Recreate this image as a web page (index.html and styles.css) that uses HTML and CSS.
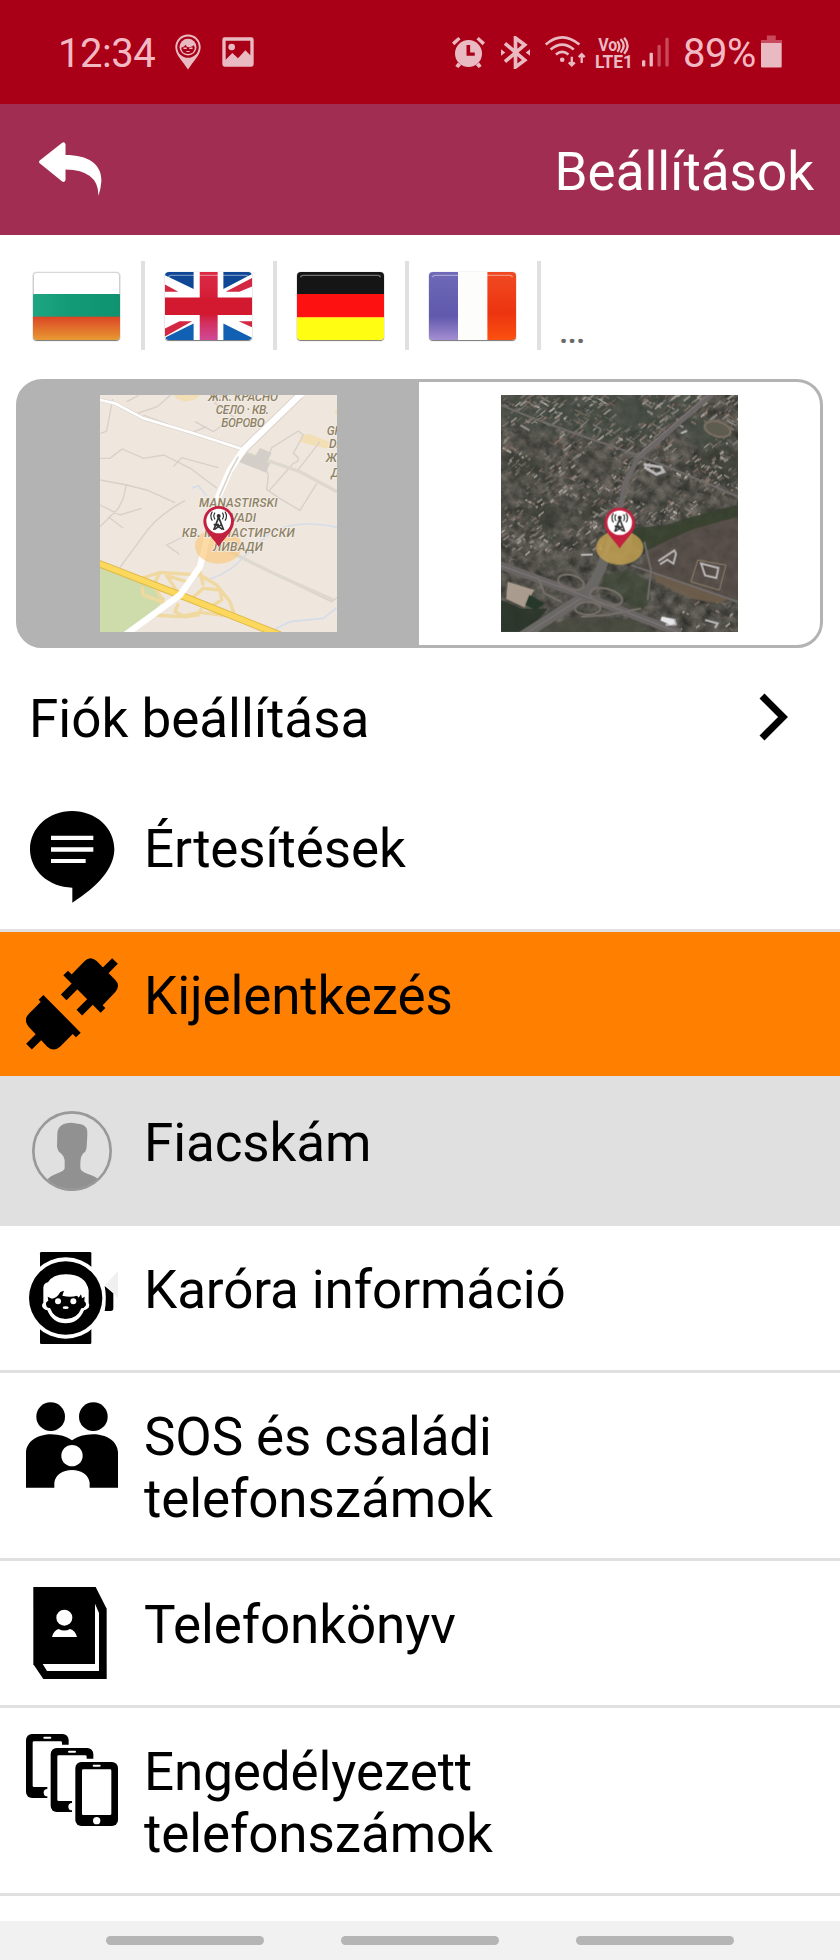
FILE: index.html
```html
<!DOCTYPE html>
<html lang="hu">
  <head>
    <meta charset="UTF-8" />
    <title>Beállítások</title>
    <link rel="stylesheet" href="styles.css">
  </head>
  <body>
    <!-- status bar -->
    <div class="status">
      <span class="time">12:34</span>
      <svg class="st-pin" viewBox="0 0 80 110">
        <path d="M40 1C18 1 1 18 1 40c0 24 24 44 39 69 15-25 39-45 39-69C79 18 62 1 40 1z" />
        <circle class="hole" cx="40" cy="40" r="33" />
        <circle cx="40" cy="40" r="26" />
        <path class="hole" d="M19 42q10-2 14-9 1 6 7 7 12 0 18-6l3 8q-2 19-21 19T19 42z" />
        <path d="M26 41h10v5H26zM44 41h10v5H44zM35 52h10v3H35z" />
      </svg>
      <svg class="st-img" viewBox="0 0 96 90">
        <path fill-rule="evenodd" d="M8 1h80q7 0 7 7v74q0 7-7 7H8q-7 0-7-7V8q0-7 7-7zM11 11v57l20-20 17 16 22-24 15 15V11z" />
        <circle cx="29" cy="30" r="10" />
      </svg>
      <svg class="st-alarm" viewBox="0 0 100 94">
        <path d="M0 17 19 0l7 7L7 25zM100 17 81 0l-7 7 19 18z" />
        <circle cx="50" cy="50" r="41" />
        <path d="m18 77 10 8-9 9-9-6zM82 77l-10 8 9 9 9-6z" />
        <path class="hole" d="M44 24h11v23h14v10H44z" />
      </svg>
      <svg class="st-bt" viewBox="0 0 88 100">
        <path class="line" d="M12 22 72 73 44 94V6l28 21-60 51" stroke-width="11" />
        <path d="m0 40 13 10L0 60zM88 40 75 50l13 10z" />
      </svg>
      <svg class="st-wifi" viewBox="0 0 124 98">
        <path class="line" d="M2 28Q52-16 104 28M17 43q35-30 70 0M33 58q19-16 38 0" stroke-width="8" />
        <circle cx="52" cy="74" r="7" />
        <path class="line" d="M81 65v26m-9-9 9 9 9-9M111 84V56m-9 10 9-9 9 9" stroke-width="7" />
      </svg>
      <svg class="st-lte" viewBox="0 0 116 100">
        <text x="10" y="45" textLength="58" lengthAdjust="spacingAndGlyphs">Vo</text>
        <path class="line" d="M68 16q14 16 0 32M78 9q19 20 0 41M89 5q21 25 0 49" stroke-width="7" />
        <text x="0" y="98" textLength="116" lengthAdjust="spacingAndGlyphs">LTE1</text>
      </svg>
      <svg class="st-signal" viewBox="0 0 82 90">
        <rect x="0" y="70" width="10" height="19" rx="3" />
        <rect x="23" y="47" width="10" height="42" rx="3" />
        <rect class="dim" x="47" y="24" width="10" height="65" rx="3" />
        <rect class="dim" x="71" y="2" width="10" height="87" rx="3" />
      </svg>
      <span class="percent">89%</span>
      <svg class="st-battery" viewBox="0 0 64 98">
        <path class="dim" d="M18 0h27v14h19v9H0v-9h18z" />
        <path d="M0 23h63v71q0 4-4 4H4q-4 0-4-4z" />
      </svg>
    </div>

    <!-- title bar -->
    <header class="header">
      <svg class="back" viewBox="0 0 190 164">
        <path d="M2 55 70 1q8-3 10 5v32c70 0 110 28 108 80q-2 26-9 44 2-78-99-80v32q-2 8-10 4L2 63q-4-4 0-8z" />
      </svg>
      <h1>Beállítások</h1>
    </header>

    <!-- languages -->
    <ul class="langs">
      <li>
        <svg class="flag" viewBox="0 0 228 207" preserveAspectRatio="none">
          <defs>
            <linearGradient id="bgRed" x2="0" y2="1"><stop offset="0" stop-color="#dc4525" /><stop offset="1" stop-color="#e79a32" /></linearGradient>
            <linearGradient id="bgGreen"><stop offset="0" stop-color="#1fa583" /><stop offset=".4" stop-color="#129b76" /><stop offset="1" stop-color="#0f9270" /></linearGradient>
          </defs>
          <rect fill="#fff" width="228" height="68" />
          <rect fill="url(#bgGreen)" y="67" width="228" height="70" />
          <rect fill="url(#bgRed)" y="136" width="228" height="71" />
          <path fill="none" stroke="#ccc" stroke-width="3" d="M1 68V12Q1 1 12 1h204q11 0 11 11v56" />
        </svg>
      </li>
      <li>
        <svg class="flag" viewBox="0 0 228 207" preserveAspectRatio="none">
          <defs>
            <linearGradient id="ukRed" x2="0" y2="1"><stop offset="0" stop-color="#dc2a45" /><stop offset=".6" stop-color="#cf1730" /><stop offset=".75" stop-color="#d2305f" /><stop offset="1" stop-color="#cf4a97" /></linearGradient>
          </defs>
          <rect fill="#fff" width="228" height="207" />
          <path fill="#0f4796" d="M5 0h70v52L0 10V0zM153 0h70l5 6-75 46z" />
          <path fill="#1160b4" d="M75 157v50H2v-8zM153 157l75 43v7h-75z" />
          <path fill="#d32742" d="M0 38 35 60H0zM228 18v26l-33 16h-36zM0 172l38-22h33L0 196zM193 150h35v18z" />
          <path fill="url(#ukRed)" d="M91 0h47v207H91z" />
          <path fill="#d2192f" d="M0 78h228v53H0z" />
          <path class="gloss" d="M10 16q0-6 6-6h196q6 0 6 6" />
        </svg>
      </li>
      <li>
        <svg class="flag" viewBox="0 0 228 207" preserveAspectRatio="none">
          <rect fill="#151515" width="228" height="68" />
          <rect fill="#fd1111" y="67" width="228" height="72" />
          <rect fill="#fffd12" y="138" width="228" height="69" />
          <path class="gloss" d="M10 16q0-6 6-6h196q6 0 6 6" />
        </svg>
      </li>
      <li>
        <svg class="flag" viewBox="0 0 228 207" preserveAspectRatio="none">
          <defs>
            <linearGradient id="frBlue" x2="0" y2="1"><stop offset="0" stop-color="#6f69b8" /><stop offset=".65" stop-color="#6059ac" /><stop offset="1" stop-color="#a48dd2" /></linearGradient>
            <linearGradient id="frRed" x2="0" y2="1"><stop offset="0" stop-color="#f04a22" /><stop offset=".6" stop-color="#ec3410" /><stop offset="1" stop-color="#fc5010" /></linearGradient>
          </defs>
          <rect fill="url(#frBlue)" width="77" height="207" />
          <rect fill="#fdfdfb" x="76" width="78" height="207" />
          <rect fill="url(#frRed)" x="153" width="75" height="207" />
          <path class="gloss" d="M10 16q0-6 6-6h196q6 0 6 6" />
        </svg>
      </li>
      <li class="more">...</li>
    </ul>

    <!-- map type switch -->
    <div class="maptype">
      <div class="option selected">
        <svg class="map" viewBox="0 0 711 711">
          <rect fill="#efe6de" width="711" height="711" />
          <path fill="#cddcaa" d="M0 510 135 560 195 612Q150 670 75 711H0z" />
          <path fill="#f3dfb5" d="M222 0h80l-18 14-28 6-28-10zM603 122l24-6 60 24 15 16-26 4-75-18zM711 42l-8 12 8 8z" />
          <g class="minor">
            <path d="M2 115 20 108 38 12M80 20l35-18M112 55l60-20 40-35M130 60l80 30 60 25 50-20M340 110l60-45-55-40 20-25M340 110 285 80M0 190h30L66 162l65 28 60-10 80 40 80 60M0 255l80 15 60 15 85 38M78 272 70 310 55 340 0 395M0 330l60 30 65-20M25 365l45 35M60 517l70-95q40-60 125-105M220 215l25-27 110 30M260 420l-60 30 38 28M505 290l75-85q30-10 0-30l30-55-15-12-80 50-20 50 10 35-5 40 40 28 60 35 50-80M590 230l70-90M405 480l290 140 16-12" />
          </g>
          <path fill="none" stroke="#ddd9cd" stroke-width="10" d="m440 175 160 55 111 60M380 465l140 70 180 80" />
          <path fill="#d3cec7" d="m416 200 22-26 28 8 14-23 35 14-14 28 9 4-12 28z" />
          <path fill="none" stroke="#d4dde9" stroke-width="5" d="M330 552q60-20 95-60l70-65q75-60 216-30M520 705l50-25 100-10 40-32M275 280l20-8 25 30" />
          <path fill="none" stroke="#f0d9a0" stroke-width="10" d="M110 555 180 532 300 540 350 570 390 620 405 665 300 652 240 665 160 660M180 532l-20 40M125 575l5 25 60 22-25-48M300 530l10 42M260 560l-60-18 40 60M340 630l25-15-5-30-50-5-45 40M235 625l-10 25 30 15 40-5 10-20" />
          <path fill="none" stroke="#dcd6ce" stroke-width="12" d="m0 15 45 10 85 45 150 45 155 50" />
          <path fill="none" stroke="#fff" stroke-width="8" d="m0 15 45 10 85 45 150 45 155 50" />
          <path fill="none" stroke="#e0b94c" stroke-width="22" d="m-10 503 250 97 300 120" />
          <path fill="none" stroke="#fcd95d" stroke-width="16" d="m-10 503 250 97 300 120" />
          <path fill="none" stroke="#d9d4cc" stroke-width="25" d="M430 165 600 0" />
          <path fill="none" stroke="#fff" stroke-width="19" d="M75 720 240 600 300 515 330 395 355 305 390 225 430 165 608-8" />
          <path fill="none" stroke="#d9d4cc" stroke-width="5" d="M358 305 393 225 415 185" />
          <ellipse fill="#fbc878" fill-opacity=".65" cx="355" cy="453" rx="70" ry="53" />
          <g class="labels">
            <text x="324" y="18" textLength="210">Ж.К. КРАСНО</text>
            <text x="347" y="58" textLength="160">СЕЛО · КВ.</text>
            <text x="364" y="97" textLength="130">БОРОВО</text>
            <text x="680" y="120">GH</text>
            <text x="687" y="160">DE</text>
            <text x="677" y="202">Ж.К</text>
            <text x="693" y="245">Д</text>
            <text x="297" y="337" textLength="236">MANASTIRSKI</text>
            <text x="360" y="380" textLength="108">LIVADI</text>
            <text x="246" y="425" textLength="338">КВ. МАНАСТИРСКИ</text>
            <text x="339" y="468" textLength="150">ЛИВАДИ</text>
          </g>
          <g id="pin">
            <path fill="#c4203f" d="M356 333a46 46 0 0 0-46 46c0 28 22 42 46 76 24-34 46-48 46-76a46 46 0 0 0-46-46z" />
            <circle fill="#fff" cx="356" cy="378" r="37" />
            <path fill="none" stroke="#333" stroke-width="5" d="m356 367-15 38m15-38 15 38m-24-16 20 14m-3-14-20 14m-3-14h16" />
            <path fill="none" stroke="#333" stroke-width="3.5" d="M345 353q-7 10 0 20M337 350q-9 14 0 27M367 353q7 10 0 20M375 350q9 14 0 27" />
            <circle fill="#333" cx="356" cy="363" r="6" />
          </g>
        </svg>
      </div>
      <div class="option">
        <svg class="map" viewBox="0 0 711 711">
          <defs>
            <filter id="ground" x="0" y="0" width="100%" height="100%" color-interpolation-filters="sRGB">
              <feTurbulence type="fractalNoise" baseFrequency=".03" numOctaves="5" seed="7" />
              <feColorMatrix values=".36 0 0 0 .14  .34 0 0 0 .145  .32 0 0 0 .13  0 0 0 0 1" />
            </filter>
            <filter id="soft"><feGaussianBlur stdDeviation="1.6" /></filter>
            <filter id="softer"><feGaussianBlur stdDeviation="9" /></filter>
          </defs>
          <rect width="711" height="711" filter="url(#ground)" />
          <!-- woods between the houses -->
          <g filter="url(#softer)">
            <path fill="#434d44" fill-opacity=".7" d="M0 0h640L450 130 300 140 0 80zM540 60l100 20 60 60-90 30-60-50z" />
            <path fill="#383d35" fill-opacity=".7" d="m50 340 100-20 30 50-60 50zM600 165l111 10v110l-130-60zM0 190l90-10 40 50-90 20zM240 320l60 10 20 60-70-20z" />
          </g>
          <g id="houses" filter="url(#soft)"></g>
          <!-- fields and woods -->
          <g filter="url(#soft)">
            <path fill="#554c46" fill-opacity=".75" d="m440 470 80-75 191-40v260l-90 10-200-100z" />
            <path fill="#35402f" fill-opacity=".85" d="m395 400 100-10 60-20 156-40v35l-130 35-70 30-80 40-40-20z" />
            <path fill="#3e4936" fill-opacity=".7" d="m310 540 70-15 60 30 10 60-40 40-50-50-60-30z" />
            <path fill="#71604d" fill-opacity=".8" d="m455 530 120 40 110 40-30 15-90-15-100-50z" />
            <path fill="#27342a" fill-opacity=".9" d="M0 615 60 640 140 640 80 711H0z" />
            <path fill="#474b3d" fill-opacity=".8" d="m140 690 90-25 180 10 60 40H110z" />
            <path fill="#a99b8d" d="m20 560 80 25-30 52-55-25z" />
            <path fill="#25382a" d="m85 600 45 25-25 20-32-15z" />
          </g>
          <!-- roads -->
          <g fill="none" filter="url(#soft)">
            <path stroke="#6b6765" stroke-width="30" d="M60 725 240 610Q290 560 312 485" />
            <path stroke="#6d6768" stroke-width="16" d="M312 485 360 330 370 270 410 190 630 0" />
            <path stroke="#8d8480" stroke-width="3" d="M405 185 625-5" />
            <path stroke="#6b6565" stroke-width="24" d="m-5 510 235 85 310 120" />
            <path stroke="#8a8482" stroke-width="2" d="m-5 510 235 85 310 120M60 725 240 610" />
            <path stroke="#716c6a" stroke-width="6" d="m0 30 110 45 140 50 160 55 150 60 151 65M390 510l320 110M430 440l20 85-10 90" />
            <g stroke="#77706b" stroke-width="6"><ellipse cx="210" cy="562" rx="40" ry="22" transform="rotate(15 210 562)" /><ellipse cx="315" cy="605" rx="50" ry="24" transform="rotate(15 315 605)" /><ellipse cx="260" cy="640" rx="38" ry="19" /><path d="m110 545 20 50 50 25M240 665l80-5 100-20" /></g>
            <ellipse fill="#5d5b50" stroke="#796e62" stroke-width="7" cx="650" cy="102" rx="40" ry="22" transform="rotate(16 650 102)" />
            <path stroke="#91826f" stroke-width="3" d="m590 495 85 15-20 75-85-25z" />
          </g>
          <!-- larger buildings -->
          <g fill="none" stroke="#b9b7b8" filter="url(#soft)">
            <path stroke-width="9" d="m428 208 52 8 8 14-22 8-36-22" />
            <path stroke-width="6" d="m472 498 48-32 5 10-8 30-18-12-22 14M600 505l52 14-6 30-34-8zM484 668l36 6 4 14-30 2M240 480l35-2M540 115l18-8M612 675l38 10-8 14" />
          </g>
          <path fill="#e6e6e8" filter="url(#soft)" d="m482 664 36 10 4 12-14 4-30-14z" />
          <ellipse fill="#c4a251" fill-opacity=".82" cx="356" cy="458" rx="71" ry="51" />
          <use href="#pin" y="5" />
        </svg>
      </div>
    </div>

    <!-- account -->
    <a class="account" href="#">
      <span>Fiók beállítása</span>
      <svg class="chevron" viewBox="0 0 30 48"><path d="m3 3 21 21L3 45" /></svg>
    </a>

    <!-- menu -->
    <ul class="menu">
      <li>
        <svg class="icon" viewBox="0 0 276 276">
          <path d="M138 0C209 0 265 50 265 115c0 57-50 112-126 160v-45C68 229 12 178 12 115 12 50 68 0 138 0z" />
          <path class="white" d="M75 74h127v13H75zM75 109h127v13H75zM75 144h104v12H75z" />
        </svg>
        <span>Értesítések</span>
      </li>
      <li class="logout">
        <svg class="icon" viewBox="0 0 276 276">
          <path d="M136 50 176 9q17-17 36 0l56 57q16 16 0 36l-40 42z" />
          <path d="M46 130 8 168q-17 18 0 38l56 60q18 17 38 0l42-42z" />
          <path class="rod" d="m119 45 112 112M45 118l112 113" stroke-width="20" />
          <path class="rod" d="m236 40 31-31M113 118l38-38M160 164l38-38M9 266l34-34" stroke-width="24" />
        </svg>
        <span>Kijelentkezés</span>
      </li>
      <li class="child">
        <svg class="icon" viewBox="0 0 276 276">
          <path fill="#919191" d="M116 165Q114 152 104 144 97 142 93 125L94 85Q96 53 137 53L165 58Q186 62 184 90L182 125Q180 142 172 144 163 155 163 170V190Q165 202 192 209 209 214 215 222 186 258 138 258T65 222Q74 212 91 206 116 198 116 190z" />
          <circle class="ring" cx="138" cy="138" r="116" />
        </svg>
        <span>Fiacskám</span>
      </li>
      <li>
        <svg class="icon" viewBox="0 0 276 276">
          <path d="M46 0H192q4 0 4 4V272q0 4-4 4H46q-4 0-4-4V4q0-4 4-4z" />
          <circle class="white" cx="119" cy="138" r="122" />
          <circle cx="119" cy="138" r="110" />
          <path class="white" d="M52 152V106q2-14 14-15 14-24 53-24 60 0 69 48v38q4 5 0 14-8 7-14 8-16 39-55 39t-55-39q-13-3-16-13 0-8 4-10z" />
          <path d="m65 134 13 6q15-2 25-20l11-4-5 15q24 6 44 0l5 6 7-10 3 12 8-5-1 14q6 3 5 12-5 9-14 9-12 32-47 32T72 168q-13 1-12-16 5-6 7-6z" />
          <circle class="white" cx="96" cy="148" r="9" /><circle class="white" cx="142" cy="148" r="9" />
          <ellipse class="white" cx="119" cy="167" rx="9" ry="4" />
          <path d="m236 102 26 22v45q0 8-8 8h-18q7-38 0-75z" />
          <path fill="#f0f0f0" d="m276 58-38 40 38 40z" />
        </svg>
        <span>Karóra információ</span>
      </li>
      <li>
        <svg class="icon" viewBox="0 0 276 276">
          <circle cx="74" cy="53" r="43" />
          <circle cx="202" cy="53" r="43" />
          <path d="M0 266V160C2 124 39 106 75 106q39 0 63 18 24-18 63-18c38 0 73 18 75 54v106h-85v-15c-3-23-24-38-53-38s-50 15-53 38v15z" />
          <circle class="white" cx="138" cy="170" r="32" />
        </svg>
        <span>SOS és családi<br>telefonszámok</span>
      </li>
      <li>
        <svg class="icon" viewBox="0 0 276 276">
          <path d="M22 0H209l33 65v211H52L22 232z" />
          <path class="white" d="m207 50 12 28v174H63l-13-21h157zM78 150q5-20 20-24 17 9 34 0 16 5 21 24z" />
          <circle class="white" cx="115" cy="92" r="24" />
        </svg>
        <span>Telefonkönyv</span>
      </li>
      <li>
        <svg class="icon" viewBox="0 0 276 276">
          <defs>
            <g id="phone">
              <rect class="white" x="-10" y="-10" width="148" height="212" rx="18" />
              <rect width="128" height="192" rx="18" />
              <rect class="white" x="20" y="22" width="88" height="137" rx="4" />
              <rect class="white" x="52" y="8" width="24" height="6" rx="3" />
              <circle class="white" cx="64" cy="176" r="11" />
            </g>
          </defs>
          <use href="#phone" />
          <use href="#phone" x="74" y="42" />
          <use href="#phone" x="148" y="84" />
        </svg>
        <span>Engedélyezett<br>telefonszámok</span>
      </li>
    </ul>

    <!-- bottom navigation -->
    <nav class="navbar">
      <i></i>
      <i></i>
      <i></i>
    </nav>
    <script src="script.js"></script>
  </body>
</html>
```

FILE: styles.css
```css
html,
body,
ul,
h1 {
  margin: 0;
  padding: 0;
}
ul {
  list-style: none;
}
svg {
  display: block;
  flex-shrink: 0;
}
body {
  display: flex;
  flex-direction: column;
  height: 1960px;
  overflow: hidden;
  background-color: #fff;
  color: #000;
  font-family: Roboto, sans-serif;
  font-size: 53px;
  line-height: 62px;
}

/* status bar */
.status {
  display: flex;
  align-items: flex-start;
  box-sizing: border-box;
  height: 104px;
  padding-left: 58px;
  background-color: #a90018;
  color: #f3b9c2;
  fill: #eabac2;
}
.status span {
  margin-top: 30px;
  font-size: 40px;
  line-height: 47px;
  letter-spacing: -0.5px;
}
.status .hole {
  fill: #a90018;
}
.status .line {
  fill: none;
  stroke: #eabac2;
}
.status .dim {
  fill: #c94a5d;
}
.status text {
  font-size: 54px;
  font-weight: 700;
}
.time {
  width: 117px;
}
.st-pin {
  width: 26px;
  height: 36px;
  margin-top: 34px;
}
.st-img {
  width: 32px;
  height: 30px;
  margin: 37px 0 0 21px;
}
.st-alarm {
  width: 33px;
  height: 31px;
  margin: 37px 0 0 198px;
}
.st-bt {
  width: 29px;
  height: 33px;
  margin: 36px 0 0 16px;
}
.st-wifi {
  width: 41px;
  height: 33px;
  margin: 35px 0 0 15px;
}
.st-lte {
  width: 38px;
  height: 33px;
  margin: 36px 0 0 9px;
  overflow: visible;
}
.st-signal {
  width: 27px;
  height: 30px;
  margin: 37px 0 0 9px;
}
.percent {
  width: 78px;
  margin-left: 14px;
}
.st-battery {
  width: 21px;
  height: 33px;
  margin-top: 35px;
}

/* title bar */
.header {
  display: flex;
  align-items: flex-start;
  justify-content: space-between;
  box-sizing: border-box;
  height: 131px;
  padding: 37px 26px 0 39px;
  background-color: #a12e52;
  color: #fff;
}
.header h1 {
  font-size: 53px;
  font-weight: 400;
}
.back {
  width: 63px;
  height: 55px;
  margin-top: 1px;
  fill: #fff;
}

/* languages */
.langs {
  display: flex;
  box-sizing: border-box;
  height: 115px;
  padding: 26px 13px 0;
}
.langs li {
  box-sizing: border-box;
  width: 132px;
  padding: 11px 0 0 20px;
  border-right: 4px solid #e0e0e0;
}
.langs .more {
  padding: 50px 0 0 18px;
  border: 0;
  color: #6a6a6a;
  font-size: 34px;
  font-weight: 500;
  line-height: 40px;
  letter-spacing: -1px;
}
.flag {
  width: 87px;
  height: 68px;
  border-radius: 4px;
  box-shadow: 0 1px 1px #777, 0 0 1px #999;
}
.gloss {
  fill: none;
  stroke: #fff;
  stroke-opacity: 0.4;
  stroke-width: 4;
}

/* map type switch */
.maptype {
  display: flex;
  box-sizing: border-box;
  width: 807px;
  height: 269px;
  margin: 29px 0 0 16px;
  border: 3px solid #b3b3b3;
  border-radius: 26px;
}
.option {
  display: flex;
  align-items: center;
  justify-content: center;
  box-sizing: border-box;
  width: 401px;
}
.selected {
  width: 400px;
  padding-right: 1px;
  border-radius: 22px 0 0 22px;
  background-color: #b3b3b3;
  box-shadow: -1px 0 0 1px #b3b3b3;
}
.map {
  width: 237px;
  height: 237px;
}
.minor {
  fill: none;
  stroke: #d6d1c9;
  stroke-width: 4;
}
.labels {
  fill: #8e8266;
  stroke: #f4eee6;
  stroke-width: 5;
  paint-order: stroke;
  font-size: 36px;
  font-style: italic;
  font-weight: 500;
}

/* account */
.account {
  display: flex;
  align-items: flex-start;
  justify-content: space-between;
  box-sizing: border-box;
  height: 137px;
  padding: 40px 51px 0 29px;
  color: #000;
  text-decoration: none;
}
.chevron {
  width: 30px;
  height: 48px;
  margin-top: 5px;
}
.chevron path {
  fill: none;
  stroke: #000;
  stroke-width: 7;
}

/* menu */
.menu li {
  display: flex;
  align-items: flex-start;
  box-sizing: border-box;
  min-height: 147px;
  padding: 26px 26px 22px;
  border-bottom: 3px solid #e0e0e0;
}
.menu li span {
  margin: 7px 0 6px 26px;
  letter-spacing: -0.12px;
}
.icon {
  width: 92px;
  height: 92px;
}
.white {
  fill: #fff;
}
.rod {
  fill: none;
  stroke: #000;
}
.ring {
  fill: none;
  stroke: #999;
  stroke-width: 8;
}
.menu .logout {
  background-color: #ff8000;
}
.menu .child {
  background-color: #e0e0e0;
}

/* bottom navigation */
.navbar {
  display: flex;
  justify-content: center;
  gap: 77px;
  box-sizing: border-box;
  height: 39px;
  margin-top: auto;
  padding-top: 15px;
  background-color: #f1f1f1;
}
.navbar i {
  width: 158px;
  height: 9px;
  border-radius: 5px;
  background-color: #b5b5b5;
}
```

FILE: script.js
```js
// scatter the roofs of the built-up area over the satellite view
var houses = document.getElementById('houses');
var seed = 12;
function rnd() {
  seed = (seed * 16807) % 2147483647;
  return seed / 2147483647;
}
var roofs = ['#8c8480', '#a59b95', '#8f766c', '#7d6f68', '#73706d', '#bcb4ae', '#6d5a54', '#39403a', '#444842'];

for (var i = 0; i < 3000; i++) {
  var x = rnd() * 711;
  var y = rnd() * 711;
  var limit = x < 320 ? 500 - x * 0.1 : 395 - (x - 320) * 0.1;
  var inTown = y < limit || (y > 610 && x > 420 && rnd() < 0.25);
  // thinner where the trees are
  if (!inTown || Math.sin(x / 37 + y / 60) + Math.cos(y / 31 - x / 80) < -1.1 + rnd() * 0.9) continue;
  var r = document.createElementNS('http://www.w3.org/2000/svg', 'rect');
  var w = 6 + rnd() * (y < 170 ? 26 : 14);
  r.setAttribute('width', w);
  r.setAttribute('height', 3 + rnd() * 4);
  r.setAttribute('fill', roofs[Math.floor(rnd() * roofs.length)]);
  r.setAttribute('opacity', 0.4 + rnd() * 0.5);
  r.setAttribute('transform', 'translate(' + x + ' ' + y + ') rotate(' + (rnd() < 0.75 ? -38 : 30) + ')');
  houses.appendChild(r);
}
```
